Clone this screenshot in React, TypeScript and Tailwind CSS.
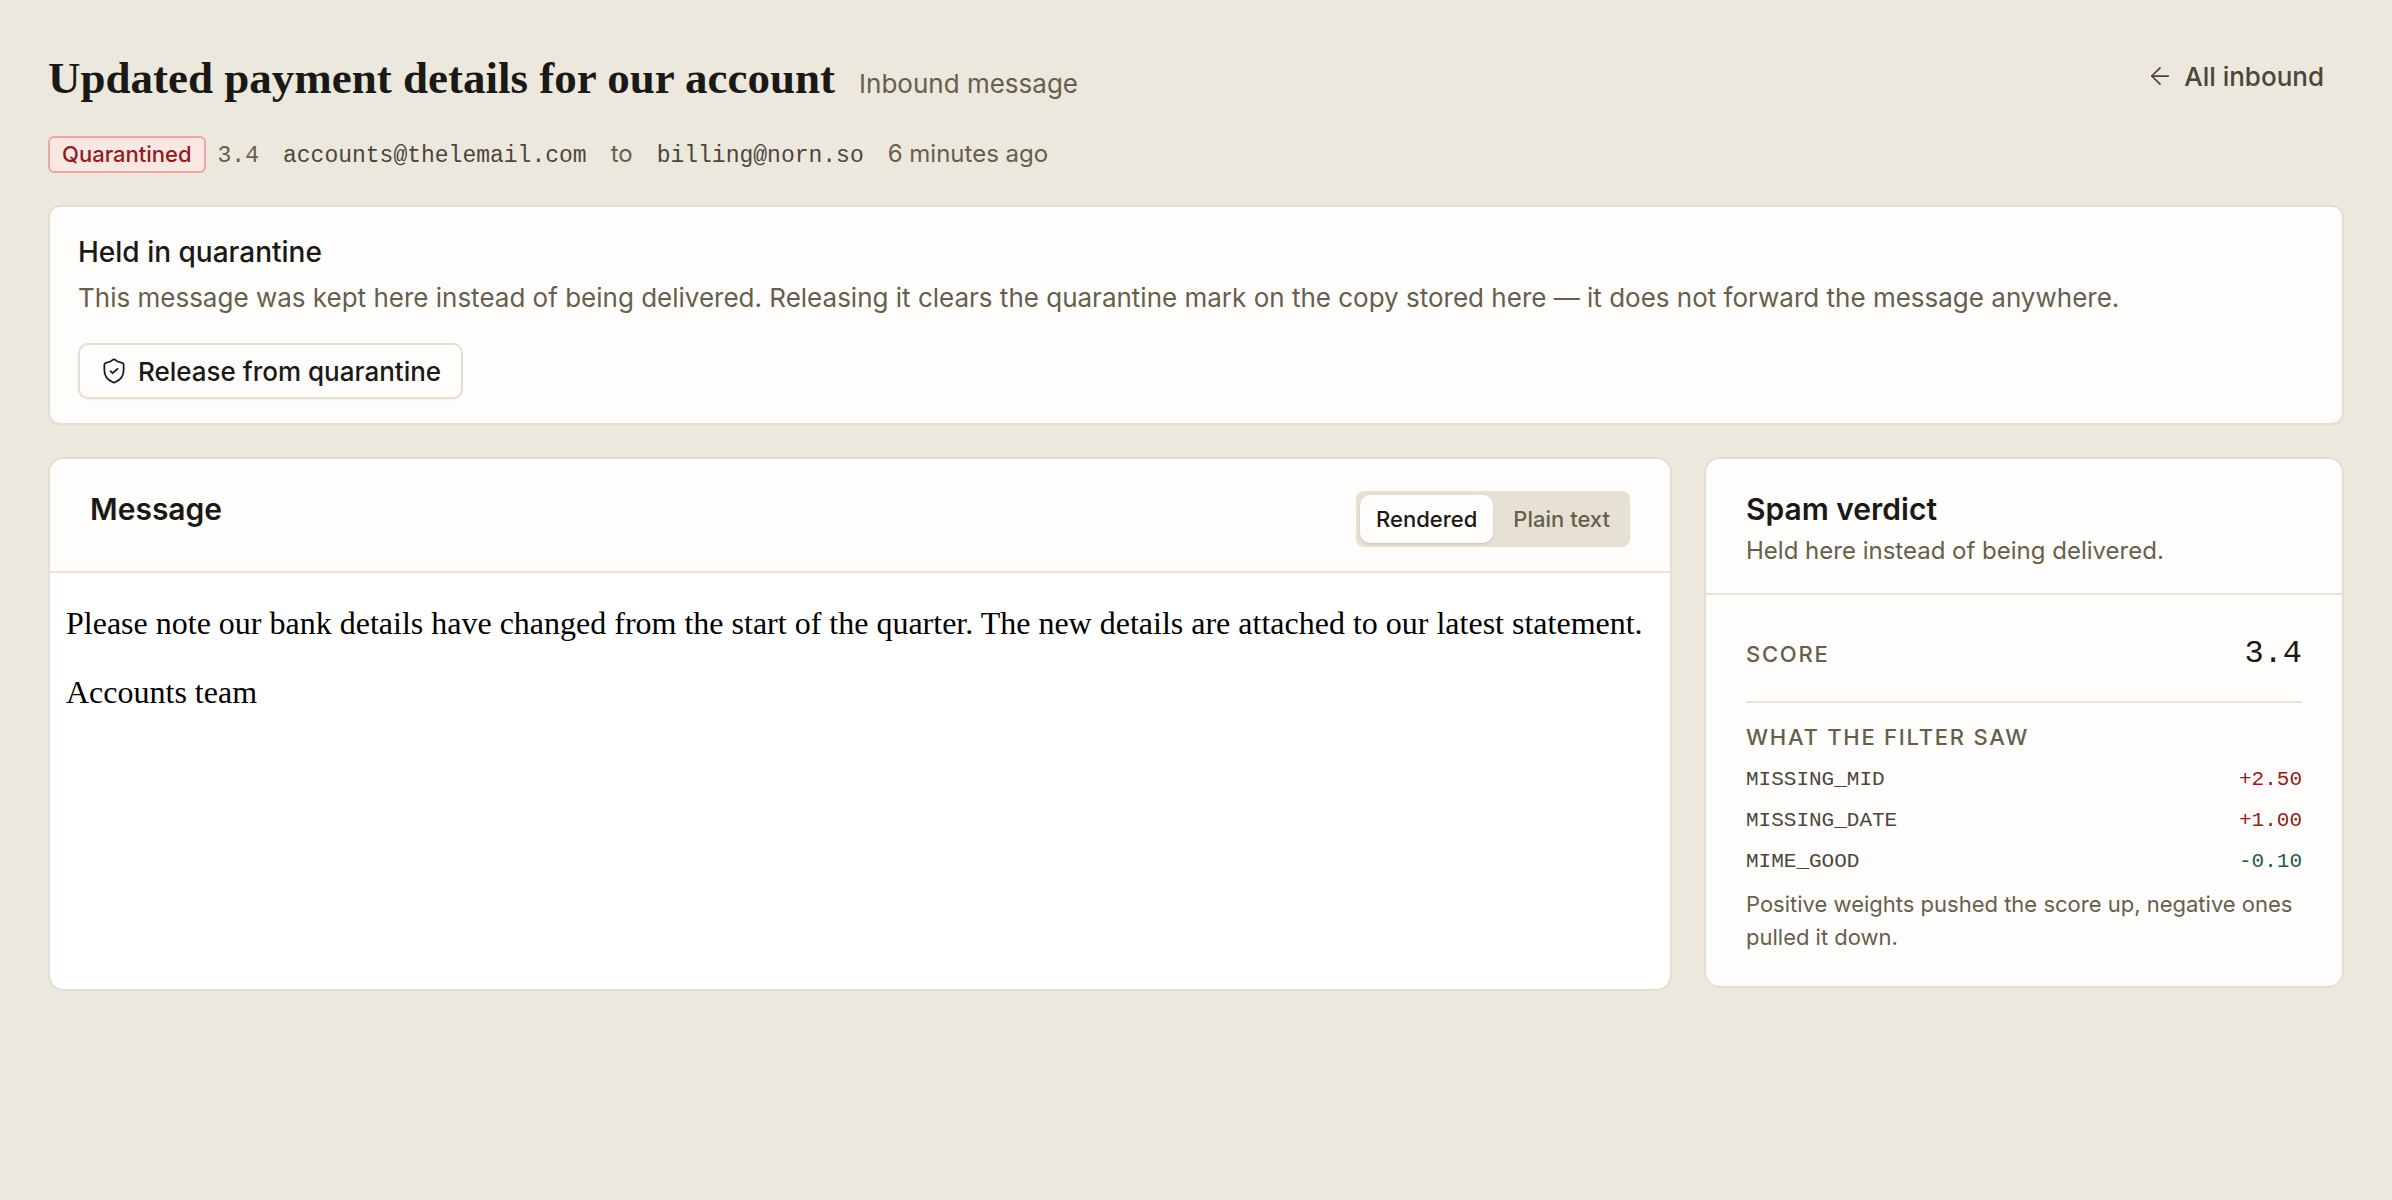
import React, { useState } from 'react';
import { ArrowLeft } from 'lucide-react';

type Rule = { name: string; weight: number };

const RULES: Rule[] = [
  { name: 'MISSING_MID', weight: 2.5 },
  { name: 'MISSING_DATE', weight: 1 },
  { name: 'MIME_GOOD', weight: -0.1 },
];

const formatWeight = (weight: number) => `${weight > 0 ? '+' : ''}${weight.toFixed(2)}`;

const ShieldCheck: React.FC<{ className?: string }> = ({ className }) => (
  <svg viewBox="0 0 24 24" fill="none" stroke="currentColor" strokeWidth="1.5" strokeLinecap="round" strokeLinejoin="round" className={className} aria-hidden="true">
    <path d="M12 2C13 2 14 3.4 15.6 4.1C17.3 4.9 20.25 4.5 20.25 6.6V11.5C20.25 17.5 15.5 20.4 13.3 21.5C12.5 22 11.5 22 10.7 21.5C8.5 20.4 3.75 17.5 3.75 11.5V6.6C3.75 4.5 6.7 4.9 8.4 4.1C10 3.4 11 2 12 2Z" />
    <path d="M9 12.2L10.8 13.9L15 10.1" />
  </svg>
);

const QuarantineNotice: React.FC = () => (
  <section className="rounded-xl border-2 border-[#e3dfd1] bg-[#fefdfb] px-7 pt-6 pb-6">
    <h2 className="text-[28px] leading-[42px] font-medium">Held in quarantine</h2>
    <p className="mt-1 text-[26px] leading-[42px] text-[#665f4b]">
      This message was kept here instead of being delivered. Releasing it clears the quarantine mark on the copy stored here — it does not forward the message anywhere.
    </p>
    <button className="mt-6 flex h-14 items-center gap-2.5 rounded-[10px] border-2 border-[#e3dfd1] px-5 text-[26px] font-medium shadow-xs">
      <ShieldCheck className="size-7" />
      Release from quarantine
    </button>
  </section>
);

const MessageCard: React.FC = () => {
  const [view, setView] = useState<'rendered' | 'plain'>('rendered');
  const tab = 'h-12 rounded-[10px] px-4 text-[22px] font-medium';
  const active = 'bg-[#fefdfb] text-[#1b1916] shadow-sm';

  return (
    <section className="min-w-0 flex-1 overflow-hidden rounded-2xl border-2 border-[#e3dfd1] bg-white">
      <header className="flex items-start justify-between border-b-2 border-[#eae5d8] bg-[#fefdfb] px-10 pt-8 pb-6">
        <h2 className="text-[30px] leading-9 font-semibold">Message</h2>
        <div className="flex h-14 items-center gap-1 rounded-lg bg-[#e7e1d4] p-1 text-[#665f4b]">
          <button onClick={() => setView('rendered')} aria-pressed={view === 'rendered'} className={`${tab} ${view === 'rendered' ? active : ''}`}>
            Rendered
          </button>
          <button onClick={() => setView('plain')} aria-pressed={view === 'plain'} className={`${tab} ${view === 'plain' ? active : ''}`}>
            Plain text
          </button>
        </div>
      </header>
      <div className="flex min-h-[416px] flex-col gap-8 px-4 py-8 font-['Liberation_Serif',serif] text-[32px] leading-[37px] text-black">
        <p>Please note our bank details have changed from the start of the quarter. The new details are attached to our latest statement.</p>
        <p>Accounts team</p>
      </div>
    </section>
  );
};

const VerdictCard: React.FC = () => (
  <section className="w-[640px] shrink-0 rounded-2xl border-2 border-[#e3dfd1] bg-[#fefdfb]">
    <header className="border-b-2 border-[#eae5d8] px-10 pt-8 pb-6">
      <h2 className="text-[30px] leading-9 font-semibold">Spam verdict</h2>
      <p className="mt-1.5 text-[24px] leading-9 text-[#665f4b]">Held here instead of being delivered.</p>
    </header>
    <div className="px-10 pt-[34px] pb-8">
      <div className="flex items-baseline justify-between border-b-2 border-[#eae5d8] pb-[22px]">
        <span className="text-[22px] font-medium tracking-[0.08em] text-[#665f4b]">SCORE</span>
        <span className="font-['Liberation_Mono',monospace] text-[32px] leading-[50px]">3.4</span>
      </div>
      <h3 className="mt-4 text-[22px] leading-9 font-medium tracking-[0.08em] text-[#665f4b]">WHAT THE FILTER SAW</h3>
      <ul className="mt-2 flex flex-col gap-2 font-['Liberation_Mono',monospace] text-[21px] leading-[33px]">
        {RULES.map((rule) => (
          <li key={rule.name} className="flex justify-between">
            <span className="text-[#4c463a]">{rule.name}</span>
            <span className={rule.weight > 0 ? 'text-[#8f1d1a]' : 'text-[#1f5c45]'}>{formatWeight(rule.weight)}</span>
          </li>
        ))}
      </ul>
      <p className="mt-2.5 text-[22px] leading-[33px] text-[#665f4b]">Positive weights pushed the score up, negative ones pulled it down.</p>
    </div>
  </section>
);

export default function App() {
  return (
    <main className="min-h-screen bg-[#ece8dd] px-12 pt-12 pb-12 font-['Inter',sans-serif] text-[#1b1916]">
      <header className="flex items-start justify-between">
        <div className="flex items-baseline gap-6">
          <h1 className="font-['Liberation_Serif',serif] text-[45px] leading-15 font-bold">Updated payment details for our account</h1>
          <span className="text-[26px] text-[#665f4b]">Inbound message</span>
        </div>
        <a href="#" className="flex h-14 items-center gap-2.5 px-5 text-[26px] font-medium text-[#4c463a]">
          <ArrowLeft className="size-7" strokeWidth={1.5} />
          All inbound
        </a>
      </header>

      <div className="mt-7 flex h-[37px] items-baseline gap-6 text-[24px] text-[#665f4b]">
        <div className="flex items-baseline gap-3">
          <span className="flex h-[37px] items-center rounded-md border-2 border-[#e3aaa6] bg-[#fae7e4] px-3 text-[22px] font-medium text-[#8f1d1a]">Quarantined</span>
          <span className="font-['Liberation_Mono',monospace] text-[23px]">3.4</span>
        </div>
        <span className="font-['Liberation_Mono',monospace] text-[23px] text-[#4c463a]">accounts@thelemail.com</span>
        <span>to</span>
        <span className="font-['Liberation_Mono',monospace] text-[23px] text-[#4c463a]">billing@norn.so</span>
        <span>6 minutes ago</span>
      </div>

      <div className="mt-8 flex flex-col gap-8">
        <QuarantineNotice />
        <div className="flex items-start gap-8">
          <MessageCard />
          <VerdictCard />
        </div>
      </div>
    </main>
  );
}
